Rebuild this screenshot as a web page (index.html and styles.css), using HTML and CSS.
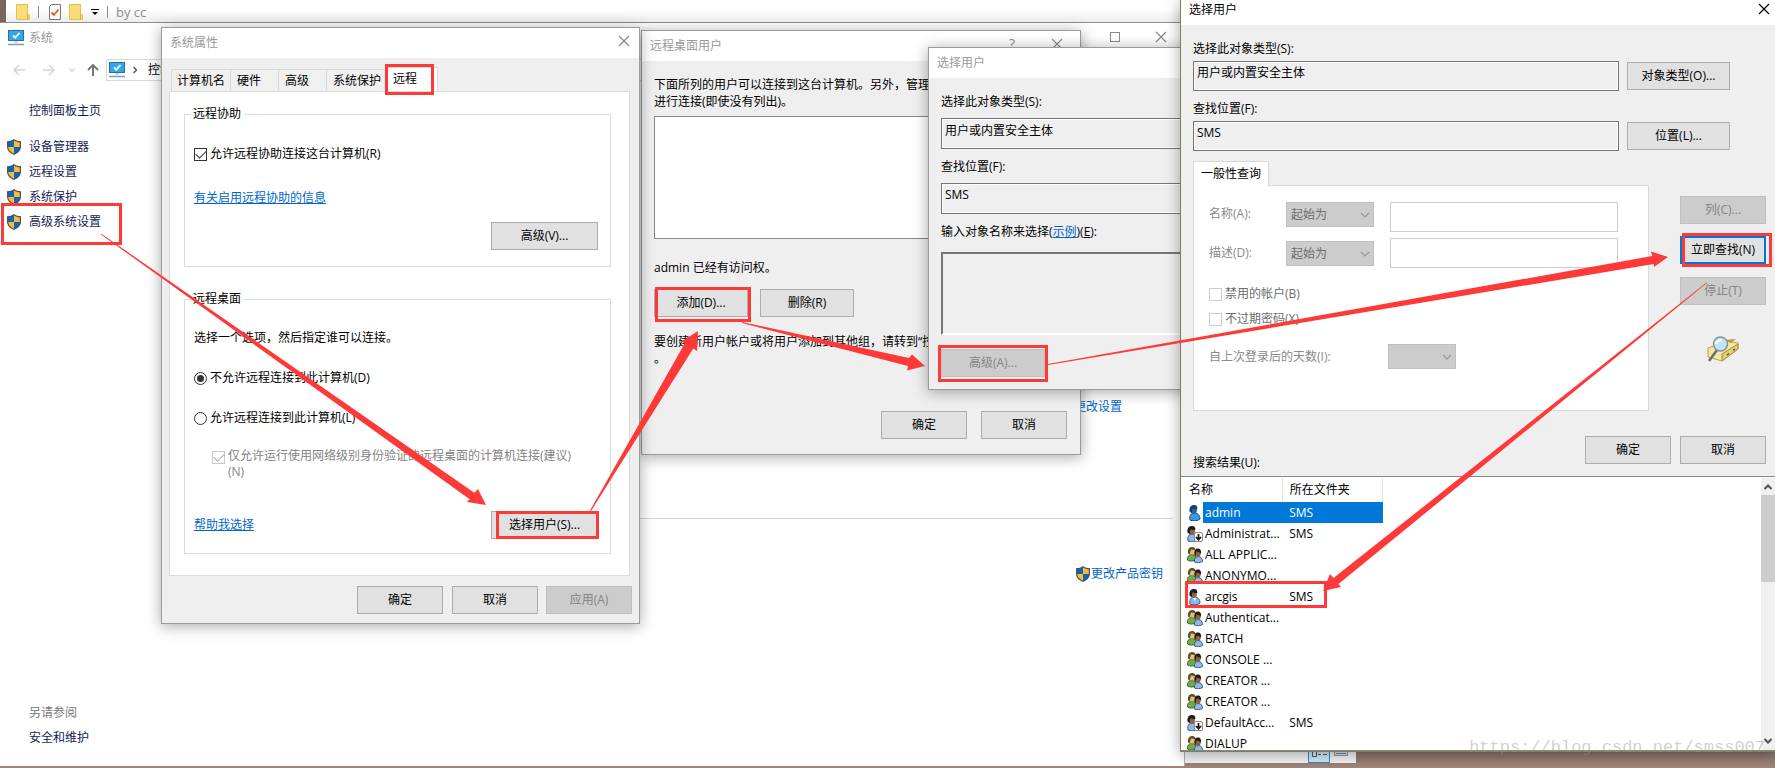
FILE: index.html
```html
<!DOCTYPE html>
<html lang="zh-CN">
<head>
<meta charset="utf-8">
<title>系统</title>
<link rel="stylesheet" href="styles.css">
</head>
<body>
<svg class="defs" aria-hidden="true">
  <symbol id="shield" viewBox="0 0 16 16">
    <path d="M8 0C6 1.500 3.500 2.200 1 2.300V7.500C1 11.500 4 14.500 8 16C12 14.500 15 11.500 15 7.500V2.300C12.500 2.200 10 1.500 8 0Z" fill="#4d5157"/>
    <path d="M8 1.500C6.300 2.700 4.300 3.200 2.200 3.400V8H8Z" fill="#0a66c2"/>
    <path d="M8 1.500C9.700 2.700 11.700 3.200 13.800 3.400V8H8Z" fill="#fdbb2f"/>
    <path d="M2.200 8H8V14.700C4.800 13.400 2.400 11 2.200 8Z" fill="#fdbb2f"/>
    <path d="M13.800 8H8V14.700C11.200 13.400 13.600 11 13.800 8Z" fill="#0a66c2"/>
  </symbol>
  <symbol id="monitor" viewBox="0 0 16 16">
    <rect x="0.500" y="0.500" width="15" height="10" fill="#2fa8ee" stroke="#2d6f98"/>
    <path d="M5 5.500L7.300 7.700L11.500 3" fill="none" stroke="#fff" stroke-width="1.800"/>
    <path d="M6 12H10" stroke="#9ab4c4"/>
    <path d="M0 14.500H16" stroke="#7f9fb2" stroke-width="1.500"/>
  </symbol>
  <symbol id="folder" viewBox="0 0 14 16">
    <path d="M0.500 0.500H11.500V10L13.500 11V15.500H0.500Z" fill="#fbdc7b" stroke="#e8bf4d"/>
    <path d="M11.500 10V15.500" stroke="#d9ac3c"/>
  </symbol>
  <symbol id="cross" viewBox="0 0 12 12">
    <path d="M1 1L11 11M11 1L1 11" fill="none" stroke="currentColor" stroke-width="1.200"/>
  </symbol>
  <symbol id="chevron" viewBox="0 0 10 6">
    <path d="M1 1L5 5L9 1" fill="none" stroke="currentColor" stroke-width="1.200"/>
  </symbol>
  <symbol id="user" viewBox="0 0 16 16">
    <path d="M3 15C2 10 4.500 8 7.500 8C11 8 13 10.500 13 14C11 16.300 5 16.300 3 15Z" fill="#8db9e8" stroke="#39598a"/>
    <path d="M6 8.500L8 12L9 8.500Z" fill="#fff"/>
    <path d="M3.500 5C3.500 2 5 0.500 7 0.500C9.200 0.500 10.300 2 10 5C9.800 7.500 8.500 9 7 9C5 9 3.500 7.500 3.500 5Z" fill="#8d6242"/>
    <path d="M2.500 6.500C2 2 4 0 7 0C9.500 0 10.600 1.500 10.300 4C8 4.300 6.500 3.500 5.500 3.500C5 5 4.800 6 4.800 8.500Z" fill="#1f1d1f"/>
  </symbol>
  <symbol id="user-selected" viewBox="0 0 16 16">
    <path d="M3 15C2 10 4.500 8 7.500 8C11 8 13 10.500 13 14C11 16.300 5 16.300 3 15Z" fill="#3f97e0" stroke="#124f91"/>
    <path d="M3.500 5C3.500 2 5 0.500 7 0.500C9.200 0.500 10.300 2 10 5C9.800 7.500 8.500 9 7 9C5 9 3.500 7.500 3.500 5Z" fill="#2c6592"/>
    <path d="M2.500 6.500C2 2 4 0 7 0C9.500 0 10.600 1.500 10.300 4C8 4.300 6.500 3.500 5.500 3.500C5 5 4.800 6 4.800 8.500Z" fill="#12406f"/>
  </symbol>
  <symbol id="user-disabled" viewBox="0 0 16 16">
    <g transform="translate(-2 0)">
      <path d="M3 15C2 10 4.500 8 7.500 8C11 8 13 10.500 13 14C11 16.300 5 16.300 3 15Z" fill="#8db9e8" stroke="#39598a"/>
      <path d="M3.500 5C3.500 2 5 0.500 7 0.500C9.200 0.500 10.300 2 10 5C9.800 7.500 8.500 9 7 9C5 9 3.500 7.500 3.500 5Z" fill="#8d6242"/>
      <path d="M2.500 6.500C2 2 4 0 7 0C9.500 0 10.600 1.500 10.300 4C8 4.300 6.500 3.500 5.500 3.500C5 5 4.800 6 4.800 8.500Z" fill="#1f1d1f"/>
    </g>
    <rect x="7.500" y="6.500" width="8" height="9" rx="1.500" fill="#fff" stroke="#8a8a8a"/>
    <path d="M11.500 8V13M9 11L11.500 13.800L14 11" fill="none" stroke="#111" stroke-width="1.700"/>
  </symbol>
  <symbol id="group" viewBox="0 0 16 16">
    <path d="M0.500 13C0 9.500 2 7.500 5 7.500C7.500 7.500 9 9 9 12.500C7 14.500 2.500 14.500 0.500 13Z" fill="#6fae45" stroke="#35672a"/>
    <circle cx="5" cy="4.300" r="3.200" fill="#e6bd7c"/>
    <path d="M1 6.500C0.500 2 2.500 0 5.300 0C7.500 0 8.800 1.500 8.500 3C6.500 3.300 5.500 2.500 4 2.500C3.500 4.500 3 5 2.800 7.500Z" fill="#5c5322"/>
    <path d="M7.500 15C7 11.500 8.500 9.500 11 9.500C14 9.500 15.500 11.500 15.500 14.500C13.500 16 9.500 16 7.500 15Z" fill="#8db9e8" stroke="#39598a"/>
    <circle cx="10.700" cy="6.700" r="3" fill="#8d6242"/>
    <path d="M7.500 8C7 3 8.500 1.500 11 1.500C13.500 1.500 14.500 3.500 14 7C13 5 11.500 5 9.500 4.500C9 6 9 7 8.500 9Z" fill="#1f1d1f"/>
  </symbol>
</svg>

<main class="desktop">
  <section class="explorer" aria-label="by cc">
    <header class="quickbar">
      <svg class="icon-folder"><use href="#folder"/></svg>
      <span class="divider"></span>
      <svg class="icon-doc" viewBox="0 0 12 16"><path d="M0.500 2.500L2.500 0.500H11.500V15.500H0.500Z" fill="#fafafa" stroke="#777"/><path d="M2.500 8.500L5 11L9.500 5.500" fill="none" stroke="#e8571f" stroke-width="1.800"/></svg>
      <svg class="icon-folder"><use href="#folder"/></svg>
      <svg class="icon-caret" viewBox="0 0 8 6"><path d="M0 0.500H8" stroke="#000"/><path d="M1 3H7L4 6Z" fill="#000"/></svg>
      <span class="divider"></span>
      <span class="caption">by cc</span>
    </header>
    <footer class="viewbar">
      <svg class="view-details" viewBox="0 0 22 14"><rect x="0.500" y="0.500" width="21" height="13" fill="#cde8f7" stroke="#2a8dd4"/><path d="M4.500 2.500H8.500V7.500H4.500Z" fill="none" stroke="#555"/><path d="M10 5.500H13M15 5.500H19" stroke="#555"/></svg>
      <svg class="view-icons" viewBox="0 0 14 8"><rect x="0.500" y="0.500" width="13" height="6" fill="#d3dfe6" stroke="#999"/><path d="M2 4.500H12" stroke="#6b8ca0"/></svg>
    </footer>
  </section>

  <section class="system" aria-label="系统">
    <header class="system-title">
      <svg class="icon16"><use href="#monitor"/></svg>
      <h1>系统</h1>
      <button class="glyph" aria-label="最大化"><svg viewBox="0 0 12 12"><rect x="1.500" y="1.500" width="9" height="9" fill="none" stroke="currentColor"/></svg></button>
      <button class="glyph" aria-label="关闭"><svg><use href="#cross"/></svg></button>
    </header>
    <nav class="navbar">
      <svg class="nav-arrow faint" viewBox="0 0 12 12"><path d="M12 6H1M6 1L1 6L6 11" fill="none" stroke="currentColor" stroke-width="1.500"/></svg>
      <svg class="nav-arrow faint" viewBox="0 0 12 12"><path d="M0 6H11M6 1L11 6L6 11" fill="none" stroke="currentColor" stroke-width="1.500"/></svg>
      <svg class="nav-down faint" viewBox="0 0 6 4"><path d="M0.500 0.500L3 3L5.500 0.500" fill="none" stroke="currentColor" stroke-width="1.500"/></svg>
      <svg class="nav-up" viewBox="0 0 12 12"><path d="M6 12V1M1 6L6 1L11 6" fill="none" stroke="currentColor" stroke-width="2"/></svg>
      <div class="address"><svg class="icon16"><use href="#monitor"/></svg><svg class="address-sep" viewBox="0 0 4 8"><path d="M0.500 1L3.500 4L0.500 7" fill="none" stroke="#555" stroke-width="1.500"/></svg><span>控制</span></div>
    </nav>
    <div class="system-body">
      <aside class="sidebar">
        <a href="#" class="home">控制面板主页</a>
        <a href="#"><svg class="icon16"><use href="#shield"/></svg>设备管理器</a>
        <a href="#"><svg class="icon16"><use href="#shield"/></svg>远程设置</a>
        <a href="#"><svg class="icon16"><use href="#shield"/></svg>系统保护</a>
        <a href="#"><svg class="icon16"><use href="#shield"/></svg>高级系统设置</a>
        <p>另请参阅</p>
        <a href="#" class="plain">安全和维护</a>
      </aside>
      <div class="overview">
        <a href="#" class="change-settings">更改设置</a>
        <hr>
        <a href="#" class="change-key"><svg class="icon16"><use href="#shield"/></svg>更改产品密钥</a>
      </div>
    </div>
  </section>

  <section class="window remote-users" aria-label="远程桌面用户">
    <header class="titlebar"><h2>远程桌面用户</h2>
      <button class="glyph question" aria-label="帮助">?</button>
      <button class="glyph" aria-label="关闭"><svg><use href="#cross"/></svg></button>
    </header>
    <div class="remote-body">
      <p class="lines">下面所列的用户可以连接到这台计算机。另外，管理<br>进行连接(即使没有列出)。</p>
      <div class="user-list"></div>
      <p class="access">admin 已经有访问权。</p>
      <div class="button-row start"><button class="btn w94">添加(D)...</button><button class="btn w94">删除(R)</button></div>
      <p class="lines hint">要创建新用户帐户或将用户添加到其他组，请转到“控<br>。</p>
      <div class="button-row end"><button class="btn">确定</button><button class="btn">取消</button></div>
    </div>
  </section>

  <section class="window properties" aria-label="系统属性">
    <header class="titlebar"><h2>系统属性</h2>
      <button class="glyph" aria-label="关闭"><svg><use href="#cross"/></svg></button>
    </header>
    <div class="tabs" role="tablist">
      <button role="tab" class="tab tab-name">计算机名</button>
      <button role="tab" class="tab">硬件</button>
      <button role="tab" class="tab">高级</button>
      <button role="tab" class="tab tab-name">系统保护</button>
      <button role="tab" class="tab active" aria-selected="true">远程</button>
    </div>
    <div class="panel">
      <fieldset class="assist">
        <legend>远程协助</legend>
        <label class="choice"><input type="checkbox" checked>允许远程协助连接这台计算机(R)</label>
        <a href="#" class="link">有关启用远程协助的信息</a>
        <button class="btn w107">高级(V)...</button>
      </fieldset>
      <fieldset class="desk">
        <legend>远程桌面</legend>
        <p>选择一个选项，然后指定谁可以连接。</p>
        <label class="choice"><input type="radio" name="remote" checked>不允许远程连接到此计算机(D)</label>
        <label class="choice"><input type="radio" name="remote">允许远程连接到此计算机(L)</label>
        <label class="choice nested"><input type="checkbox" checked disabled><span>仅允许运行使用网络级别身份验证的远程桌面的计算机连接(建议)<br>(N)</span></label>
        <div class="help-row"><a href="#" class="link">帮助我选择</a><button class="btn w107">选择用户(S)...</button></div>
      </fieldset>
    </div>
    <div class="button-row footer"><button class="btn">确定</button><button class="btn">取消</button><button class="btn" disabled>应用(A)</button></div>
  </section>

  <section class="window picker" aria-label="选择用户">
    <header class="titlebar"><h2>选择用户</h2></header>
    <div class="picker-body">
      <label for="p-type">选择此对象类型(S):</label>
      <input id="p-type" class="sunken" value="用户或内置安全主体" readonly>
      <label for="p-loc">查找位置(F):</label>
      <input id="p-loc" class="sunken" value="SMS" readonly>
      <label for="p-names">输入对象名称来选择(<a href="#" class="link">示例</a>)(<u>E</u>):</label>
      <textarea id="p-names" readonly></textarea>
      <button class="btn w104" disabled>高级(A)...</button>
    </div>
  </section>

  <section class="window search" aria-label="选择用户">
    <header class="titlebar"><h2>选择用户</h2>
      <button class="glyph" aria-label="关闭"><svg><use href="#cross"/></svg></button>
    </header>
    <div class="search-form">
      <label for="s-type">选择此对象类型(S):</label>
      <div class="field-row"><input id="s-type" class="sunken" value="用户或内置安全主体" readonly><button class="btn">对象类型(O)...</button></div>
      <label for="s-loc">查找位置(F):</label>
      <div class="field-row"><input id="s-loc" class="sunken" value="SMS" readonly><button class="btn">位置(L)...</button></div>
    </div>
    <div class="query">
      <div class="query-main">
        <button class="query-tab" role="tab" aria-selected="true">一般性查询</button>
        <div class="query-panel">
          <div class="criteria">
            <label for="q-name">名称(A):</label>
            <span class="combo"><select disabled aria-label="名称条件"><option>起始为</option></select><svg><use href="#chevron"/></svg></span>
            <input id="q-name" type="text" disabled>
          </div>
          <div class="criteria second">
            <label for="q-desc">描述(D):</label>
            <span class="combo"><select disabled aria-label="描述条件"><option>起始为</option></select><svg><use href="#chevron"/></svg></span>
            <input id="q-desc" type="text" disabled>
          </div>
          <label class="choice"><input type="checkbox" disabled>禁用的帐户(B)</label>
          <label class="choice"><input type="checkbox" disabled>不过期密码(X)</label>
          <div class="days">
            <label for="q-days">自上次登录后的天数(I):</label>
            <span class="combo"><select id="q-days" disabled></select><svg><use href="#chevron"/></svg></span>
          </div>
        </div>
      </div>
      <div class="query-actions">
        <button class="btn" disabled>列(C)...</button>
        <button class="btn default">立即查找(N)</button>
        <button class="btn" disabled>停止(T)</button>
        <svg class="icon-search" viewBox="0 0 32 26">
          <path d="M1 12L19 5L31 7V13L15 25L1 21Z" fill="#f1e7a0" stroke="#b8a44c"/>
          <path d="M15 25V18L31 8V13Z" fill="#dfcf78" stroke="#a48f35"/>
          <path d="M17 4L29 3L24 7Z" fill="#c39a32"/>
          <path d="M20 19L22 17.500M26 14.500L28 13" stroke="#5c5426" stroke-width="1.500"/>
          <path d="M10 14L2 25" stroke="#6b6b6b" stroke-width="2.500"/>
          <circle cx="13.500" cy="8" r="7" fill="#c3e3f7" stroke="#87959e" stroke-width="1.500"/>
          <path d="M9 8C10 5 12 4 15 4" fill="none" stroke="#fff" stroke-width="2"/>
        </svg>
      </div>
    </div>
    <div class="result-head">
      <span>搜索结果(U):</span>
      <button class="btn">确定</button><button class="btn">取消</button>
    </div>
    <div class="results">
      <table>
        <thead><tr><th>名称</th><th>所在文件夹</th></tr></thead>
        <tbody>
          <tr class="selected"><td><div><svg><use href="#user-selected"/></svg><span>admin</span></div></td><td>SMS</td></tr>
          <tr><td><div><svg><use href="#user-disabled"/></svg><span>Administrat...</span></div></td><td>SMS</td></tr>
          <tr><td><div><svg><use href="#group"/></svg><span>ALL APPLIC...</span></div></td><td></td></tr>
          <tr><td><div><svg><use href="#group"/></svg><span>ANONYMO...</span></div></td><td></td></tr>
          <tr><td><div><svg><use href="#user"/></svg><span>arcgis</span></div></td><td>SMS</td></tr>
          <tr><td><div><svg><use href="#group"/></svg><span>Authenticat...</span></div></td><td></td></tr>
          <tr><td><div><svg><use href="#group"/></svg><span>BATCH</span></div></td><td></td></tr>
          <tr><td><div><svg><use href="#group"/></svg><span>CONSOLE ...</span></div></td><td></td></tr>
          <tr><td><div><svg><use href="#group"/></svg><span>CREATOR ...</span></div></td><td></td></tr>
          <tr><td><div><svg><use href="#group"/></svg><span>CREATOR ...</span></div></td><td></td></tr>
          <tr><td><div><svg><use href="#user-disabled"/></svg><span>DefaultAcc...</span></div></td><td>SMS</td></tr>
          <tr><td><div><svg><use href="#group"/></svg><span>DIALUP</span></div></td><td></td></tr>
        </tbody>
      </table>
      <div class="scrollbar">
        <svg viewBox="0 0 10 6"><path d="M1.500 5L5 1.500L8.500 5" fill="none" stroke="#505050" stroke-width="2"/></svg>
        <span class="thumb"></span>
        <svg viewBox="0 0 10 6"><path d="M1.500 1L5 4.500L8.500 1" fill="none" stroke="#505050" stroke-width="2"/></svg>
      </div>
    </div>
  </section>

  <svg class="marks" viewBox="0 0 1775 768" aria-hidden="true">
    <g fill="none" stroke="#fd3a38" stroke-width="3">
      <rect x="2.500" y="204.500" width="118" height="39"/>
      <rect x="386.500" y="65.500" width="46" height="28"/>
      <rect x="497.500" y="512.500" width="100" height="25"/>
      <rect x="656.500" y="288.500" width="93" height="32"/>
      <rect x="939.500" y="346.500" width="107" height="34"/>
      <rect x="1683.500" y="234.500" width="87" height="31"/>
      <rect x="1186.500" y="582.500" width="139" height="24"/>
    </g>
    <g fill="#fd3a38">
      <path d="M101 233.500L474.300 492.700L478 489L486 505L467 502L469.700 499.300L101 234.500Z"/>
      <path d="M590 510.500L684.700 343.400L681.700 341.600L698 331L697 351L693.300 348.600L591 511Z"/>
      <path d="M742 322L909 358L912 354.500L925 366L907 370.500L908 366L742 323Z"/>
      <path d="M1048 364L1652.300 256L1651 251.500L1668 257L1654 267L1653.700 264L1048 365Z"/>
      <path d="M1706.500 282.500L1333.500 578L1330 574L1323 591L1341 587L1338.500 584L1707 283Z"/>
    </g>
  </svg>
  <p class="watermark">https://blog.csdn.net/smss007</p>
</main>
</body>
</html>
```

FILE: styles.css
```css
* { box-sizing: border-box; }

body {
  margin: 0;
  font: 12px/16px "Open Sans", "Noto Sans CJK SC", sans-serif;
  color: #000;
}

h1, h2, p { margin: 0; font-size: 12px; font-weight: 400; }
button, input, select, textarea { font: inherit; color: inherit; margin: 0; }
a { color: #0066cc; text-decoration: none; }
.link { text-decoration: underline; }
.defs { position: absolute; width: 0; height: 0; }
.icon16 { width: 16px; height: 16px; flex: none; }

.desktop {
  position: relative;
  height: 100vh;
  overflow: hidden;
  background: linear-gradient(#7a665d 97%, #a2877b);
}

/* Window behind everything */
.explorer {
  position: absolute;
  top: 0;
  left: 6px;
  width: 1350px;
  bottom: 5px;
  display: flex;
  flex-direction: column;
  justify-content: space-between;
  background: #f2f2f2;
}
.quickbar {
  display: flex;
  align-items: center;
  gap: 8px;
  height: 23px;
  padding-left: 10px;
  background: linear-gradient(#fff 40%, #ececec);
}
.icon-folder { width: 14px; height: 16px; }
.icon-doc { width: 12px; height: 16px; margin-left: 2px; }
.icon-caret { width: 8px; height: 6px; }
.divider { width: 1px; height: 12px; background: #888; }
.caption { color: #8c8c8c; font-size: 13px; }
.viewbar { display: flex; justify-content: flex-end; gap: 4px; padding-right: 8px; }
.view-details { width: 22px; height: 14px; }
.view-icons { width: 14px; height: 8px; }

/* System control panel */
.system {
  position: absolute;
  top: 22px;
  left: 0;
  width: 1185px;
  bottom: 2px;
  display: flex;
  flex-direction: column;
  border-top: 1px solid #8f8f8f;
  border-right: 1px solid #b0b0b0;
  background: #fff;
}
.system-title {
  display: flex;
  align-items: center;
  height: 30px;
  padding: 0 17px 0 8px;
  color: #999;
}
.system-title h1 { flex: 1; margin-left: 5px; }
.system-title .glyph + .glyph { margin-left: 34px; }
.system-title .glyph { margin-bottom: 2px; }
.glyph {
  width: 12px;
  height: 16px;
  padding: 0;
  border: 0;
  background: none;
  color: #8a8a8a;
}
.glyph svg { display: block; width: 12px; height: 12px; }
.navbar { display: flex; align-items: center; height: 34px; padding-left: 13px; color: #777; }
.nav-arrow { width: 12px; height: 12px; margin-right: 18px; }
.nav-down { width: 6px; height: 4px; margin: 0 12px 0 -4px; }
.nav-up { width: 12px; height: 12px; margin-right: 7px; }
.faint { color: #d4d4d4; }
.address {
  display: flex;
  align-items: center;
  flex: 1;
  height: 22px;
  padding-left: 2px;
  border: 1px solid #d9d9d9;
  color: #000;
}
.address-sep { width: 4px; height: 8px; margin: 0 11px 0 8px; }
.system-body { display: flex; flex: 1; }
.sidebar {
  display: flex;
  flex-direction: column;
  gap: 9px;
  width: 161px;
  padding: 16px 0 20px 6px;
}
.sidebar a { display: flex; gap: 7px; color: #151c55; }
.sidebar .home { padding: 0 0 11px 23px; }
.sidebar p { margin-top: auto; padding-left: 23px; color: #777; }
.sidebar .plain { padding-left: 23px; }
.overview { display: flex; flex-direction: column; align-items: flex-end; flex: 1; padding: 312px 11px 0 0; }
.overview hr { align-self: stretch; margin: 103px 0 47px; border: 0; border-top: 1px solid #d6d6d6; }
.change-settings { padding-right: 51px; }
.change-key { display: flex; padding-right: 10px; }

/* Dialogs */
.window {
  position: absolute;
  border: 1px solid #9b9b9b;
  background: #efefef;
  box-shadow: 0 2px 14px rgba(0, 0, 0, 0.35);
}
.titlebar {
  display: flex;
  align-items: center;
  height: 30px;
  padding: 0 9px 0 8px;
  background: #fff;
  color: #999;
}
.titlebar h2 { flex: 1; }
.titlebar .glyph { padding-bottom: 4px; }

.btn {
  width: 86px;
  height: 28px;
  padding: 0;
  border: 1px solid #adadad;
  background: #e1e1e1;
  white-space: nowrap;
}
.btn:disabled { border-color: #bfbfbf; background: #ccc; color: #838383; }
.btn.default { border: 2px solid #0078d7; }
.w94 { width: 94px; }
.w104 { width: 104px; }
.w107 { width: 107px; }
.button-row { display: flex; }

.choice { display: flex; align-items: center; gap: 3px; }
.choice input {
  appearance: none;
  flex: none;
  display: grid;
  place-items: center;
  width: 13px;
  height: 13px;
  border: 1px solid #333;
  background: #fff;
}
.choice input[type="radio"] { border-radius: 50%; }
.choice input[type="radio"]:checked::after { content: ""; width: 7px; height: 7px; border-radius: 50%; background: #333; }
.choice input[type="checkbox"]:checked::after {
  content: "";
  width: 9px;
  height: 5px;
  margin-bottom: 3px;
  border: solid #333;
  border-width: 0 0 1px 1px;
  transform: rotate(-45deg);
}
.choice input:disabled { border-color: #ccc; }
.choice input[type="checkbox"]:disabled::after { border-color: #aaa; }

/* System properties */
.properties { top: 27px; left: 161px; width: 479px; }
.tabs { display: flex; align-items: flex-end; height: 33px; padding: 9px 9px 0; }
.tab {
  width: 48px;
  height: 22px;
  padding: 0 0 0 6px;
  border: 1px solid #d9d9d9;
  border-width: 1px 1px 0 0;
  background: #f0f0f0;
  text-align: left;
  white-space: nowrap;
}
.tab-name { width: 60px; }
.tab:first-child { border-left-width: 1px; padding-left: 5px; }
.tab.active { width: 51px; height: 24px; background: #fff; padding-bottom: 2px; }
.panel { margin: 0 9px 0 7px; padding: 14px 18px 21px 14px; border: 1px solid #dcdcdc; background: #fff; }
.panel fieldset { display: flex; flex-direction: column; align-items: flex-start; margin: 0; padding: 0 12px 0 9px; border: 1px solid #dcdcdc; }
.panel legend { padding: 0 3px 0 2px; margin-left: -3px; }
.panel .assist { padding-bottom: 16px; margin-bottom: 24px; }
.assist .choice { margin: 24px 0 28px; }
.assist .btn { align-self: flex-end; margin-top: 16px; }
.panel .desk { padding-bottom: 14px; }
.desk > p { margin: 23px 0 24px; }
.desk .choice + .choice { margin-top: 24px; }
.desk .nested { align-items: flex-start; padding-left: 18px; color: #838383; }
.desk .choice + .nested { margin-top: 22px; }
.nested input { margin-top: 3px; }
.help-row { display: flex; justify-content: space-between; align-items: center; align-self: stretch; margin-top: 31px; }
.footer { justify-content: flex-end; gap: 9px; padding: 10px 7px 9px; }
.footer .btn + .btn:disabled { margin-left: -1px; }

/* Remote desktop users */
.remote-users { top: 30px; left: 641px; width: 440px; }
.remote-users .titlebar { padding-right: 17px; }
.remote-users .glyph + .glyph { margin-left: 33px; }
.glyph.question { font-size: 14px; line-height: 12px; }
.remote-body { padding: 15px 13px 15px 12px; }
.lines { line-height: 17px; white-space: nowrap; }
.user-list { height: 123px; margin: 6px 0 21px; border: 1px solid #828790; background: #fff; }
.button-row.start { gap: 12px; margin-top: 13px; }
.button-row.end { justify-content: flex-end; gap: 14px; }
.hint { margin: 16px 0 44px; }

/* Select users, small */
.picker { top: 47px; left: 928px; width: 420px; }
.picker-body { display: flex; flex-direction: column; align-items: stretch; padding: 16px 12px 12px; }
.sunken {
  width: 100%;
  height: 31px;
  padding: 0 4px 8px 3px;
  border: 1px solid #767676;
  outline: 1px solid #fff;
  outline-offset: -2px;
  border-radius: 0;
  background: #efefef;
}
.picker .sunken { margin: 8px 0 10px; }
.picker textarea {
  height: 83px;
  margin: 12px 0 14px;
  border: 2px solid #fff;
  border-top-color: #767676;
  border-left-color: #767676;
  background: #efefef;
  resize: none;
}

/* Select users, search */
.search {
  top: 0;
  bottom: 16px;
  left: 1180px;
  right: 0;
  display: flex;
  flex-direction: column;
  border: solid #877d55;
  border-width: 0 0 1px 1px;
}
.search .titlebar { flex: none; height: 25px; padding: 0 5px 5px 8px; color: #000; }
.search .glyph { color: #000; padding-bottom: 3px; }
.search-form { padding: 16px 45px 0 12px; }
.search-form label { display: block; }
.field-row { display: grid; grid-template-columns: 1fr 103px; gap: 8px; align-items: center; margin: 4px 0 10px; }
.field-row .sunken { height: 30px; }
.field-row .btn { width: 103px; }
.query { display: grid; grid-template-columns: 1fr 86px; gap: 31px; padding: 0 9px 0 12px; }
.query-tab {
  position: relative;
  display: block;
  width: 76px;
  height: 25px;
  padding: 0;
  border: 1px solid #d9d9d9;
  border-bottom: 0;
  background: #fff;
}
.query-panel { margin-top: -1px; padding: 16px 30px 41px 15px; border: 1px solid #d9d9d9; background: #fff; color: #6d6d6d; }
.criteria { display: grid; grid-template-columns: 77px 88px 1fr; align-items: start; line-height: 24px; color: #8a8a8a; }
.criteria.second { align-items: center; margin: 6px 0 18px; }
.criteria input { height: 30px; min-width: 0; margin-left: 16px; border: 1px solid #ccc; background: #fff; }
.combo { position: relative; display: block; }
.combo select {
  appearance: none;
  display: block;
  width: 100%;
  height: 25px;
  padding: 0 4px;
  border: 1px solid #bfbfbf;
  border-radius: 0;
  background: #ccc;
  color: #6d6d6d;
  opacity: 1;
}
.combo svg { position: absolute; top: 10px; right: 4px; width: 10px; height: 6px; color: #999; }
.query-panel .choice + .choice { margin-top: 9px; }
.days { display: grid; grid-template-columns: 179px 68px; align-items: center; margin-top: 17px; color: #8a8a8a; }
.query-actions { display: flex; flex-direction: column; align-items: center; gap: 12px; padding-top: 35px; }
.query-actions .default { margin-bottom: 1px; }
.icon-search { width: 32px; height: 26px; margin-top: 19px; }
.result-head { display: flex; gap: 9px; height: 35px; margin: 25px 9px 5px 12px; }
.result-head span { flex: 1; padding-top: 19px; }
.results {
  display: flex;
  justify-content: space-between;
  flex: 1;
  min-height: 0;
  overflow: hidden;
  padding: 1px 0 0 1px;
  border: solid #828790;
  border-width: 1px 0;
  background: #fff;
}
.results table { width: 201px; align-self: flex-start; table-layout: fixed; border-collapse: collapse; }
.results th { height: 24px; padding: 0 0 0 7px; border-right: 1px solid #e5e5e5; text-align: left; font-weight: 400; }
.results td { height: 21px; padding: 0 0 0 7px; white-space: nowrap; }
.results td:first-child { padding: 0 0 0 5px; }
.results th + th, .results td + td { padding-left: 7px; }
.results td div { display: flex; align-items: center; }
.results td svg { width: 16px; height: 16px; flex: none; }
.results td span { flex: 1; padding-left: 2px; line-height: 21px; }
.selected span, .selected td + td { background: #0078d7; color: #fff; }
.scrollbar { display: flex; flex-direction: column; align-items: center; width: 14px; padding: 6px 0; background: #f0f0f0; }
.scrollbar svg { width: 10px; height: 6px; flex: none; }
.thumb { width: 100%; height: 87px; margin: 5px 0 auto; background: #cdcdcd; }

/* Annotations over the desktop */
.marks { position: absolute; top: 0; left: 0; width: 1775px; height: 768px; pointer-events: none; }
.watermark {
  position: absolute;
  right: 10px;
  bottom: 10px;
  font: 17px/20px "Liberation Mono", monospace;
  color: rgba(150, 150, 135, 0.45);
}
```
